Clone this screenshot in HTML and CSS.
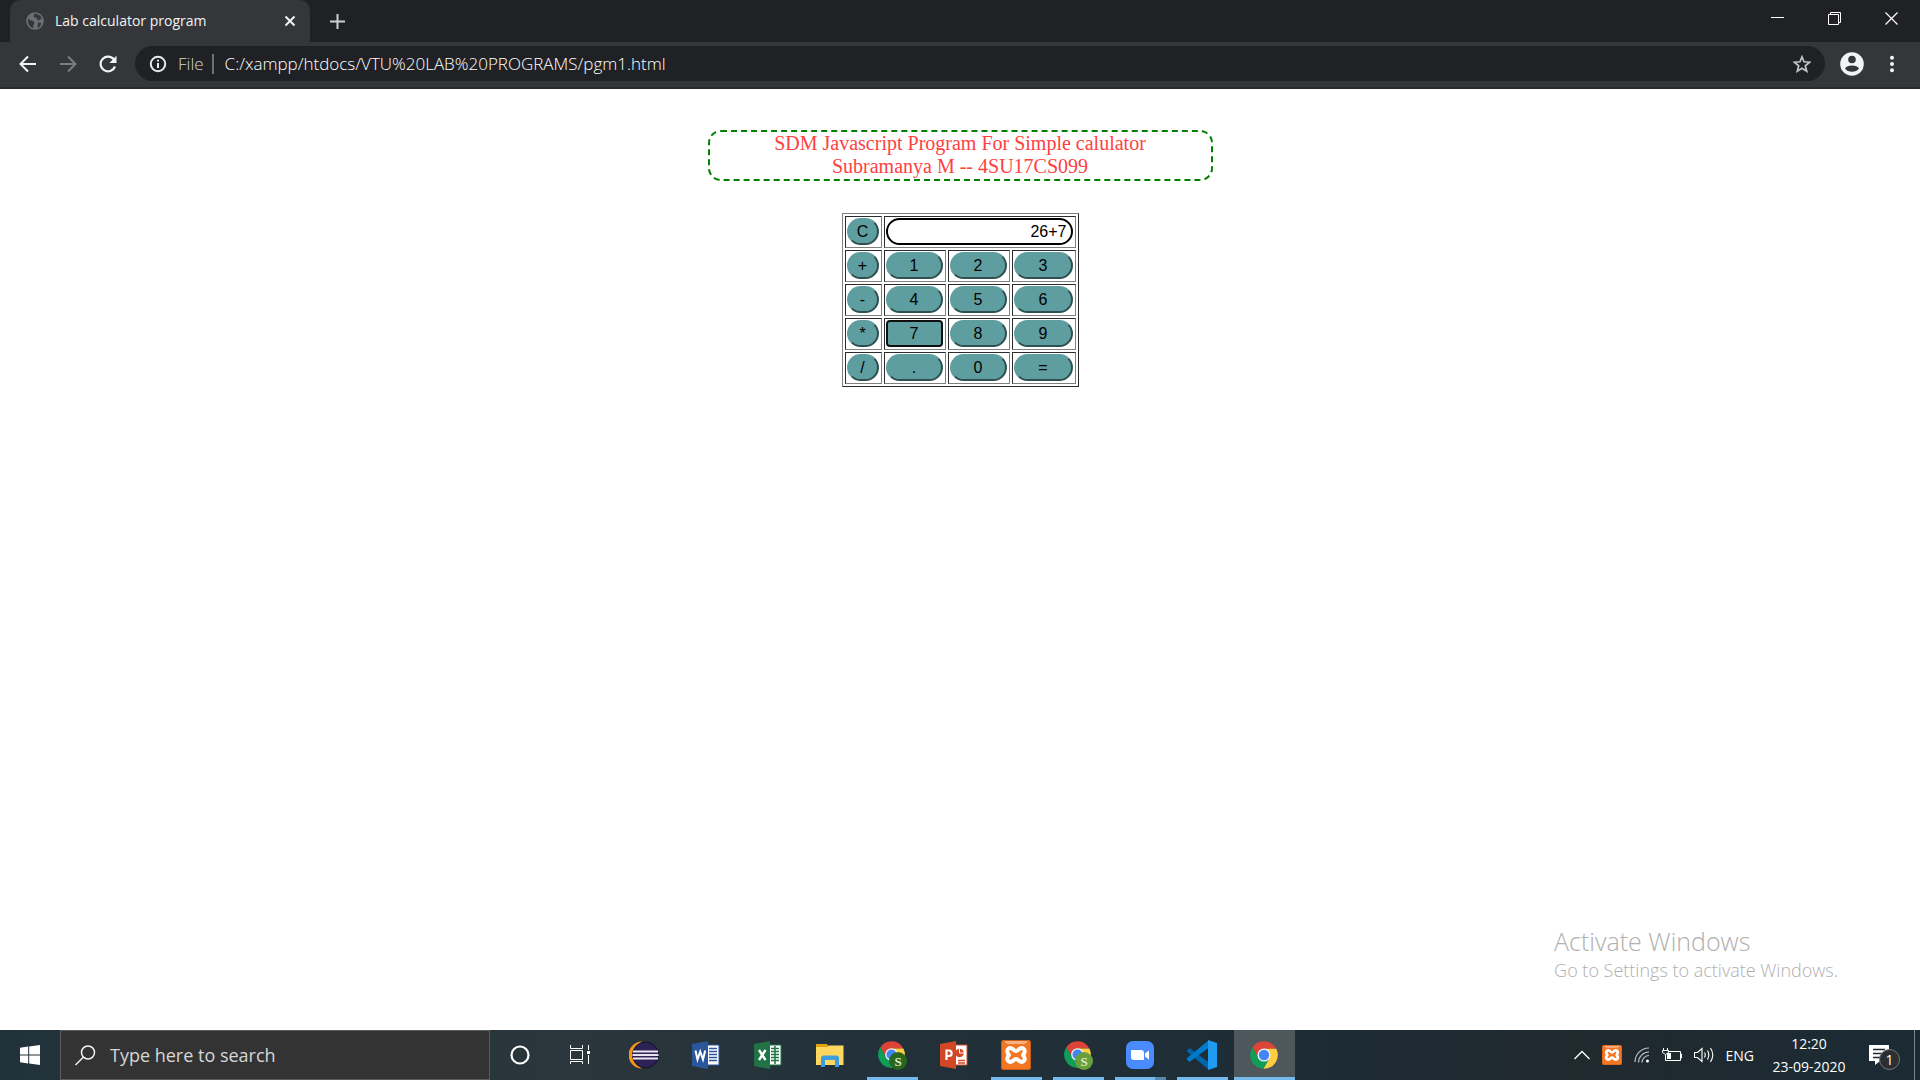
FILE: index.html
```html
<!DOCTYPE html>
<html lang="en">
<head>
<meta charset="utf-8">
<title>Lab calculator program</title>
<link rel="stylesheet" href="styles.css">
</head>
<body>
<svg class="defs" aria-hidden="true">
  <symbol id="chrome" viewBox="0 0 48 48">
    <path fill="#db4437" d="M5.5 12A22 22 0 0 1 43.6 14H24L15.3 29Z"/>
    <path fill="#ffcd40" d="M43.6 14A22 22 0 0 1 22.9 46L32.7 29 24 14Z"/>
    <path fill="#0f9d58" d="M22.9 46A22 22 0 0 1 5.5 12L15.3 29H32.7Z"/>
    <circle cx="24" cy="24" r="10.5" fill="#f1f1f1"/>
    <circle cx="24" cy="24" r="8.3" fill="#4285f4"/>
  </symbol>
  <symbol id="xampp" viewBox="0 0 30 30">
    <rect width="30" height="30" rx="3" fill="#f37623"/>
    <path d="M3 1H27L24 4H6Z" fill="#f9b083"/>
    <rect x=".5" y=".5" width="29" height="29" rx="3" fill="none" stroke="#c95d17"/>
    <path d="M11 8.500C7 7 4.500 11 8 15C4.500 19 7 23 11 21.500C13 20.500 13 19 15 19C17 19 17 20.500 19 21.500C23 23 25.500 19 22 15C25.500 11 23 7 19 8.500C17 9.500 17 11 15 11C13 11 13 9.500 11 8.500Z" fill="none" stroke="#fff" stroke-width="4" stroke-linejoin="round"/>
  </symbol>
</svg>

<header class="browser">
  <div class="tabstrip">
    <div class="tab">
      <svg width="18" height="18" viewBox="0 0 18 18"><circle cx="9" cy="9" r="8.800" fill="#6b6f74"/><path d="M2 6.500C4 9 7 8 8 10C9 12 6.500 13 7.500 16C4 15.500 1.500 12 2 6.500ZM8.500 1.800C12 1.500 15 4 16 7C14 6 13.500 9 11.500 8C10 7 12 5.500 9.500 5.500C7.500 5.500 7 3.500 8.500 1.800ZM12 11C14 10 15.500 11 15 12.500C14 15 12 16 11.500 15.500Z" fill="#35363a"/></svg>
      <span class="tab-title">Lab calculator program</span>
      <button class="tab-close" aria-label="Close tab"><svg width="12" height="12" viewBox="0 0 12 12"><path d="M1.500 1.500 10.500 10.500M10.500 1.500 1.500 10.500" stroke="#f1f3f4" stroke-width="2"/></svg></button>
    </div>
    <button class="new-tab" aria-label="New tab"><svg width="15" height="15" viewBox="0 0 15 15"><path d="M7.500 0V15M0 7.500H15" stroke="#d0d1d3" stroke-width="2"/></svg></button>
    <div class="captions">
      <button aria-label="Minimize"><svg width="13" height="13" viewBox="0 0 13 13"><path d="M0 5.500H13" stroke="#fff"/></svg></button>
      <button aria-label="Restore"><svg width="13" height="13" viewBox="0 0 13 13"><path d="M.5 2.500H10.500V12.500H.5ZM2.500 2V.5H12.500V10.500H11" fill="none" stroke="#fff"/></svg></button>
      <button aria-label="Close"><svg width="13" height="13" viewBox="0 0 13 13"><path d="M.5.5 12.500 12.500M12.500.5.5 12.500" stroke="#fff" stroke-width="1.200"/></svg></button>
    </div>
  </div>
  <div class="toolbar">
    <button aria-label="Back"><svg width="18" height="18" viewBox="0 0 18 18"><path d="M17 9H2M9 1.500 1.500 9 9 16.500" fill="none" stroke="#f1f3f4" stroke-width="2"/></svg></button>
    <button aria-label="Forward"><svg width="18" height="18" viewBox="0 0 18 18"><path d="M1 9H16M9 1.500 16.500 9 9 16.500" fill="none" stroke="#7c7d80" stroke-width="2"/></svg></button>
    <button aria-label="Reload"><svg width="18" height="18" viewBox="0 0 18 18"><path d="M15.300 5A7.400 7.400 0 1 0 16 11.500" fill="none" stroke="#f1f3f4" stroke-width="2.200"/><path d="M17.500.8V8H10.300Z" fill="#f1f3f4"/></svg></button>
    <form class="omnibox">
      <svg width="18" height="18" viewBox="0 0 18 18"><circle cx="9" cy="9" r="7.200" fill="none" stroke="#e8eaed" stroke-width="2"/><path d="M9 8V13M9 4.800V6.600" stroke="#e8eaed" stroke-width="2"/></svg>
      <label for="url">File</label>
      <input id="url" type="text" value="C:/xampp/htdocs/VTU%20LAB%20PROGRAMS/pgm1.html">
      <button type="button" aria-label="Bookmark this page"><svg width="18" height="18" viewBox="0 0 18 18"><path d="M9 1.800 11 6.800 16.600 7.200 12.300 10.800 13.700 16.200 9 13.300 4.300 16.200 5.700 10.800 1.400 7.200 7 6.800Z" fill="none" stroke="#c4c5c7" stroke-width="1.700"/></svg></button>
    </form>
    <button aria-label="Profile"><svg width="24" height="24" viewBox="0 0 24 24"><circle cx="12" cy="12" r="11.800" fill="#f1f3f4"/><circle cx="12" cy="7.500" r="3.800" fill="#35363a"/><path d="M5 16.500C6.500 12.500 17.500 12.500 19 16.500C16 20.800 8 20.800 5 16.500Z" fill="#35363a"/></svg></button>
    <button aria-label="Menu"><svg width="18" height="18" viewBox="0 0 18 18" fill="#f1f3f4"><circle cx="9" cy="2.800" r="2"/><circle cx="9" cy="9" r="2"/><circle cx="9" cy="15.200" r="2"/></svg></button>
  </div>
</header>

<main class="page">
  <div class="heading">SDM Javascript Program For Simple calulator<br>Subramanya M -- 4SU17CS099</div>
  <table class="calc">
    <tr><td><button>C</button></td><td colspan="3"><input class="display" type="text" value="26+7" aria-label="Result"></td></tr>
    <tr><td><button>+</button></td><td><button>1</button></td><td><button>2</button></td><td><button>3</button></td></tr>
    <tr><td><button>-</button></td><td><button>4</button></td><td><button>5</button></td><td><button>6</button></td></tr>
    <tr><td><button>*</button></td><td><button class="focused">7</button></td><td><button>8</button></td><td><button>9</button></td></tr>
    <tr><td><button>/</button></td><td><button>.</button></td><td><button>0</button></td><td><button>=</button></td></tr>
  </table>
  <aside class="watermark">
    <p class="wm-title">Activate Windows</p>
    <p class="wm-text">Go to Settings to activate Windows.</p>
  </aside>
</main>

<footer class="taskbar">
  <button class="start" aria-label="Start"><svg width="20" height="20" viewBox="0 0 20 20" fill="#fff"><path d="M0 2.700 8.200 1.500V9.500H0ZM9.200 1.400 20 0V9.500H9.200ZM0 10.500H8.200V18.500L0 17.300ZM9.200 10.500H20V20L9.200 18.600Z"/></svg></button>
  <form class="search">
    <svg width="21" height="21" viewBox="0 0 21 21"><circle cx="13" cy="7.500" r="6.500" fill="none" stroke="#f2f2f2" stroke-width="1.500"/><path d="M8.500 12 .5 20" stroke="#f2f2f2" stroke-width="1.500"/></svg>
    <input type="text" placeholder="Type here to search" aria-label="Search">
  </form>
  <button class="sys" aria-label="Cortana"><svg width="20" height="20" viewBox="0 0 20 20"><circle cx="10" cy="10" r="8.500" fill="none" stroke="#fff" stroke-width="2.200"/></svg></button>
  <button class="sys" aria-label="Task View"><svg width="20" height="20" viewBox="0 0 20 20" fill="none" stroke="#fff"><path d="M.5 0V3.500H12.500V0M.5 5.500H12.500V14.500H.5ZM.5 19V16.500H12.500V19M18.500 0V5M18.500 10V19"/><path d="M17 6H20V9H17Z" fill="#fff" stroke="none"/></svg></button>
  <nav class="apps">
    <button aria-label="Eclipse"><svg width="30" height="28" viewBox="0 0 30 28"><path d="M13 .5A13.500 13.500 0 0 0 13 27.500A17 17 0 0 1 13 .5Z" fill="#f7941e"/><circle cx="16.500" cy="14" r="13" fill="#2c2255" stroke="#15122b"/><path d="M4 10.500H29M3.500 14H29.500M4 17.500H29" stroke="#e8e4f1" stroke-width="2"/></svg></button>
    <button aria-label="Word"><svg width="28" height="28" viewBox="0 0 28 28"><path d="M15 4H27V24H15Z" fill="#fff" stroke="#2b579a"/><path d="M17 7.500H25M17 10.500H25M17 13.500H25M17 16.500H25M17 19.500H25" stroke="#2b579a" stroke-width="1.500"/><path d="M0 3 16 0V28L0 25Z" fill="#2b579a"/><path d="M3.500 9.500 5.500 18.500 8.200 10.500 11 18.500 13.200 9.500" fill="none" stroke="#fff" stroke-width="2"/></svg></button>
    <button aria-label="Excel"><svg width="28" height="28" viewBox="0 0 28 28"><path d="M15 4H27V24H15Z" fill="#fff" stroke="#217346"/><path d="M17 7.500H25M17 10.500H25M17 13.500H25M17 16.500H25M17 19.500H25M21 5V23" stroke="#217346" stroke-width="1.500"/><path d="M0 3 16 0V28L0 25Z" fill="#217346"/><path d="M5 9 11.500 19M11.500 9 5 19" fill="none" stroke="#fff" stroke-width="2.400"/></svg></button>
    <button aria-label="File Explorer"><svg width="28" height="24" viewBox="0 0 28 24"><path d="M0 1H11L13 4V8H0Z" fill="#e0a30b"/><path d="M0 4H11L13 2.500H27.500V22H0Z" fill="#ffd75e"/><path d="M5 24V14L7 12.500H21L23 14V24H19V17H9V24Z" fill="#3e9de0"/></svg></button>
    <button class="running" aria-label="Google Chrome"><svg width="30" height="30" viewBox="0 0 30 30"><use href="#chrome" x="0" y="0" width="29" height="29"/><circle cx="21" cy="21" r="9" fill="#2b661f"/><text x="21" y="26" class="badge-s">S</text></svg></button>
    <button aria-label="PowerPoint"><svg width="28" height="28" viewBox="0 0 28 28"><path d="M15 4H27V24H15Z" fill="#fff" stroke="#d24726"/><path d="M18 19.500H25M18 22H25" stroke="#d24726" stroke-width="1.300"/><circle cx="19.500" cy="12" r="4.300" fill="#d24726"/><path d="M19.500 12V7.500M19.500 12H24" stroke="#fff" stroke-width="1"/><path d="M0 3 16 0V28L0 25Z" fill="#d24726"/><path d="M6.500 19V9.500H9C12.500 9.500 12.500 15 9 15H6.500" fill="none" stroke="#fff" stroke-width="2.200"/></svg></button>
    <button class="running" aria-label="XAMPP"><svg width="30" height="30"><use href="#xampp"/></svg></button>
    <button class="running" aria-label="Google Chrome, second profile"><svg width="30" height="30" viewBox="0 0 30 30"><use href="#chrome" x="0" y="0" width="29" height="29"/><circle cx="21" cy="21" r="9" fill="#689f38"/><text x="21" y="26" class="badge-s">S</text></svg></button>
    <button class="running multi" aria-label="Zoom"><svg width="28" height="28" viewBox="0 0 28 28"><rect width="28" height="28" rx="7" fill="#4a8cff"/><path d="M5 9H15Q18 9 18 12V19H8Q5 19 5 16ZM19 12.500 23 9.500V18.500L19 15.500Z" fill="#fff"/></svg></button>
    <button class="running" aria-label="Visual Studio Code"><svg width="30" height="30" viewBox="0 0 30 30"><path d="M0 10.500 2.500 8 22 22.500V30L0 11.500Z" fill="#0065a9"/><path d="M0 19.500 2.500 22 22 7.500V0L0 18Z" fill="#007acc"/><path d="M21 0 30 3V27L21 30Z" fill="#1f9cf0"/></svg></button>
    <button class="running active" aria-label="Google Chrome, current window"><svg width="30" height="30"><use href="#chrome"/></svg></button>
  </nav>
  <div class="tray">
    <svg width="16" height="10" viewBox="0 0 16 10"><path d="M.5 9 8 1.500 15.500 9" fill="none" stroke="#fff" stroke-width="1.300"/></svg>
    <svg width="20" height="20"><use href="#xampp"/></svg>
    <svg width="16" height="16" viewBox="0 0 16 16" fill="none" stroke="#b9c0c4" stroke-width="1.200"><path d="M1 15A14 14 0 0 1 15 1M4.500 15.500A10.500 10.500 0 0 1 15 5M8 15.500A7 7 0 0 1 15 8.500"/><circle cx="13.500" cy="14" r="1.500" fill="#fff" stroke="none"/></svg>
    <svg width="20" height="14" viewBox="0 0 20 14" fill="none" stroke="#fff"><path d="M6.500 3.500H18.500V12.500H3.500V7M18.500 6H19.500V10H18.500M1.500 0V2M5.500 0V2M.5 2.500H6.500V4.500L3.500 6.500L.5 4.500Z"/><path d="M5 5H9V11H5Z" fill="#fff" stroke="none"/></svg>
    <svg width="20" height="16" viewBox="0 0 20 16" fill="none" stroke="#fff" stroke-width="1.100"><path d="M.5 5.500H3.500L8 1.500V14.500L3.500 10.500H.5ZM10.500 5.500Q12 8 10.500 10.500M13.500 3.500Q16 8 13.500 12.500M16.500 1Q21 8 16.500 15"/></svg>
    <span>ENG</span>
    <time class="clock">12:20<br>23-09-2020</time>
    <button class="notify" aria-label="Notifications"><svg width="30" height="31" viewBox="0 0 30 31"><path d="M0 0H20V16H11L6 20V16H0Z" fill="#fff"/><path d="M4 4.500H16M4 8.500H16M4 12.500H12" stroke="#1c2b33" stroke-width="1.500"/></svg><span class="count">1</span></button>
    <button class="desktop" aria-label="Show desktop"></button>
  </div>
</footer>
</body>
</html>
```
FILE: styles.css
```css
* { box-sizing: border-box; }

body {
  margin: 0;
  min-height: 100vh;
  display: flex;
  flex-direction: column;
  background: #fff;
  font-family: "Open Sans", "Noto Sans", sans-serif;
}

button {
  padding: 0;
  border: 0;
  background: none;
  color: inherit;
  font: inherit;
}

svg { display: block; flex: none; }
.defs { position: absolute; width: 0; height: 0; }

/* Browser window */
.browser { background: #202124; color: #f1f3f4; }

.browser button, .taskbar button {
  display: flex;
  align-items: center;
  justify-content: center;
}

.tabstrip { display: flex; height: 42px; padding-left: 10px; }

.tab {
  display: flex;
  align-items: center;
  width: 300px;
  padding: 0 14px 0 16px;
  border-radius: 10px 10px 0 0;
  background: #35363a;
  font-size: 14px;
}

.tab-title { flex: 1; padding: 0 0 2px 11px; }
.new-tab { width: 54px; }
.captions { display: flex; margin-left: auto; }
.captions button { width: 57px; height: 37px; }

.toolbar {
  display: flex;
  align-items: center;
  height: 47px;
  padding: 0 8px 2px;
  border-bottom: 2px solid #292a2d;
  background: #35363a;
}

.toolbar > button { width: 40px; height: 36px; }

.omnibox {
  flex: 1;
  display: flex;
  align-items: center;
  height: 35px;
  margin: 0 7px;
  padding: 0 14px;
  border-radius: 18px;
  background: #202124;
  font-size: 17px;
  font-weight: 300;
}

.omnibox label {
  margin-left: 11px;
  padding-right: 8px;
  border-right: 2px solid #6f7073;
  line-height: 20px;
  color: #d5d6d8;
}

.omnibox input {
  flex: 1;
  padding: 0 0 0 11px;
  border: 0;
  background: none;
  color: #fff;
  font: inherit;
}

/* Web page */
.page {
  position: relative;
  flex: 1;
  padding-top: 41px;
}

.heading {
  width: 505px;
  margin: 0 auto 32px;
  padding-bottom: 1px;
  border: 2px dashed green;
  border-radius: 13px;
  color: #ff4040;
  font: 20px/23px "Liberation Serif", serif;
  text-align: center;
}

.calc {
  margin: 0 auto;
  border: 1px solid;
  border-color: #808080 #2c2c2c #2c2c2c #808080;
  border-spacing: 2px;
}

.calc td {
  width: 62px;
  height: 32px;
  padding: 1px 2px 2px 1px;
  border: 1px solid;
  border-color: #2c2c2c #808080 #808080 #2c2c2c;
}

.calc td:first-child { width: 37px; }
.calc td:nth-child(4) { width: 64px; }

.calc button, .display {
  display: block;
  width: 100%;
  height: 27px;
  border-radius: 14px;
  font: 16px "Liberation Sans", sans-serif;
}

.calc button {
  padding: 0;
  border: 2px solid;
  border-color: #5f9ea0 #2f5050 #2f5050 #5f9ea0;
  background: #5f9ea0;
  color: #000;
}

.calc .focused { outline: 2px solid #101010; outline-offset: -2px; }

.calc button.focused {
  border-radius: 4px;
  border-color: #101010;
  outline: 0;
}

.display {
  padding: 0 4px;
  border: 2px solid #000;
  background: #fff;
  color: #000;
  text-align: right;
}

.watermark {
  position: absolute;
  right: 82px;
  bottom: 47px;
  color: #b0b0b0;
  font-weight: 300;
}

.watermark p { margin: 0; }
.wm-title { font-size: 25px; line-height: 32px; }
.wm-text { font-size: 18px; line-height: 26px; }

/* Taskbar */
.taskbar {
  display: flex;
  height: 50px;
  background: linear-gradient(90deg, #21323b, #2a363b 30%, #22313a 45%, #1d2b34 70%, #20292e 82%, #1b2b34);
  color: #fff;
}

.start, .sys { width: 60px; }

.search {
  display: flex;
  align-items: center;
  width: 430px;
  padding: 0 14px;
  border: 1px solid #5d5d5d;
  background: #333;
}

.search input {
  flex: 1;
  padding: 0 0 0 14px;
  border: 0;
  background: none;
  font: 18px "Open Sans", "Noto Sans", sans-serif;
}

.search input::placeholder { color: #d6d6d6; }

.apps { display: flex; gap: 1px; margin-left: 4px; }
.apps button { width: 61px; height: 50px; padding-right: 2px; }

.running {
  background: linear-gradient(#76b9ed, #76b9ed) bottom / 51px 3px no-repeat;
}

.running.multi {
  background-image: linear-gradient(90deg, #76b9ed 40px, #5688b0 40px);
}

.running.active {
  background-color: #4e575b;
  background-size: 61px 3px;
}

.badge-s {
  fill: #dcebd5;
  font: bold 13px "Liberation Serif", serif;
  text-anchor: middle;
}

.tray {
  display: flex;
  align-items: center;
  gap: 12px;
  margin-left: auto;
  font-size: 14px;
}

.clock { width: 86px; line-height: 23px; text-align: center; }

.notify { position: relative; margin-right: 3px; padding: 10px 0 0 5px; }

.count {
  position: absolute;
  left: 15px;
  top: 14px;
  width: 21px;
  height: 21px;
  border: 1px solid #777;
  border-radius: 50%;
  background: #2c2f31;
  line-height: 19px;
  text-align: center;
}

.tray .desktop { width: 6px; height: 50px; border-left: 1px solid #7b858a; }
```
